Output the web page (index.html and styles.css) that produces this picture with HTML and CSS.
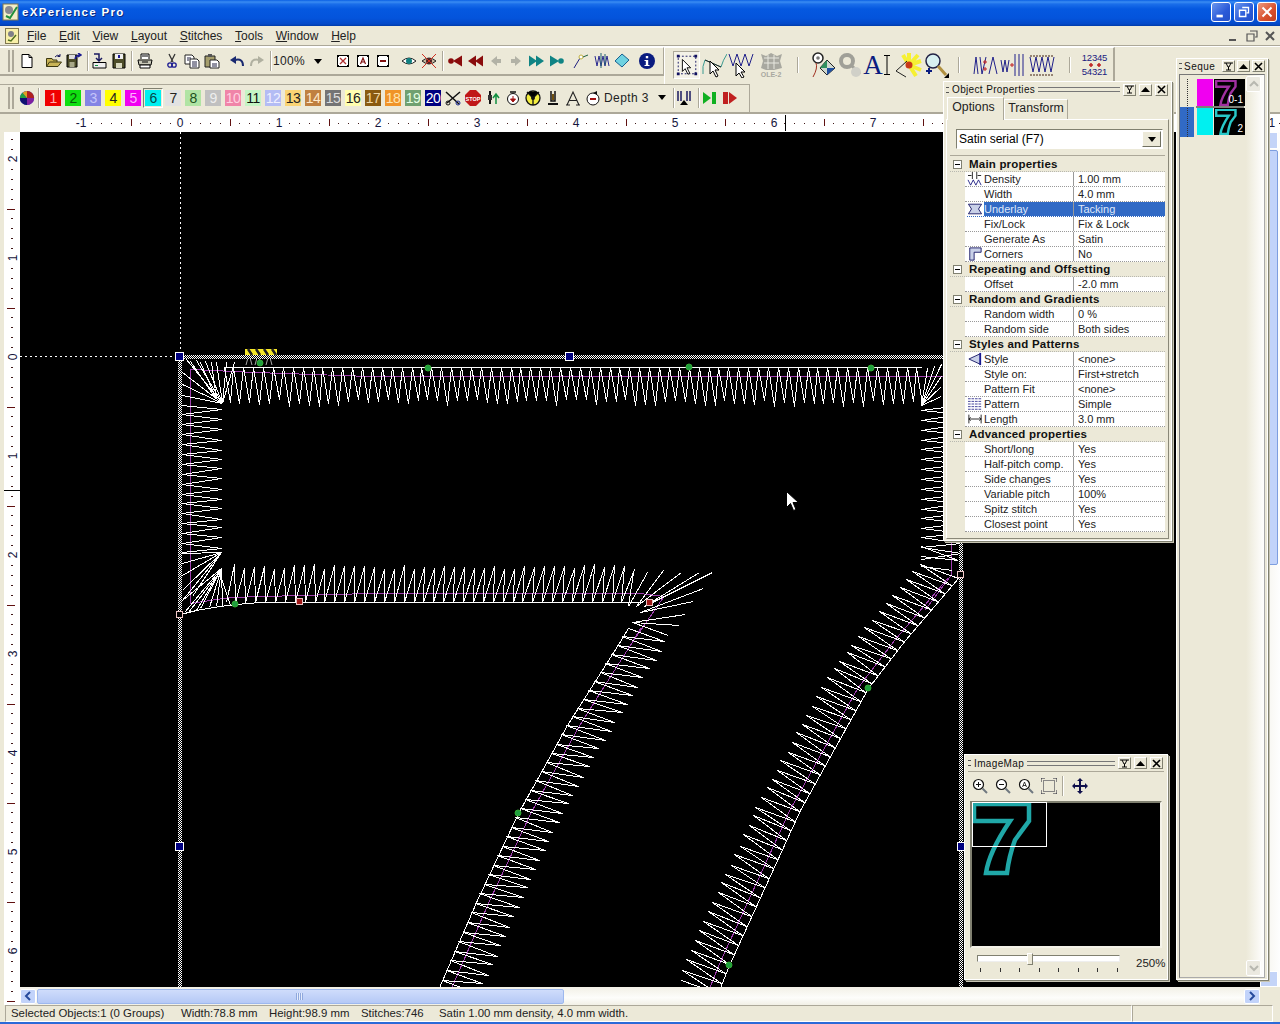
FILE: index.html
```html
<!DOCTYPE html>
<html lang="en">
<head>
<meta charset="utf-8">
<title>eXPerience Pro</title>
<link rel="stylesheet" href="styles.css">
</head>
<body>
<svg class="defs" width="0" height="0">
  <defs>
    <symbol id="seven" viewBox="972 802 60 74"><path d="M974 804H1029V821L1015 840Q1009 856 1007 873H986Q989 852 1010 821H974Z" fill="none" stroke="currentColor"/></symbol>
    <symbol id="pin" viewBox="0 0 9 9"><path d="M0 1H9M2 1L4 5H5L7 1M4.500 5V8M2 8H7" fill="none" stroke="#000"/></symbol>
    <symbol id="up" viewBox="0 0 9 9"><path d="M4.500 2L9 7H0Z" fill="#000"/></symbol>
    <symbol id="cross" viewBox="0 0 9 9"><path d="M1 1L8 8M8 1L1 8" stroke="#000" stroke-width="1.600"/></symbol>
    <pattern id="dither" width="2" height="2" patternUnits="userSpaceOnUse"><rect width="2" height="2" fill="#000"/><rect width="1" height="1" fill="#fff"/><rect x="1" y="1" width="1" height="1" fill="#fff"/></pattern>
  </defs>
</svg>
<div class="window">
  <header class="titlebar">
    <svg class="appicon" viewBox="0 0 18 18"><rect x="1" y="1" width="15" height="16" fill="#f2eec8" stroke="#807850"/><circle cx="7" cy="7" r="4" fill="#8a8a90"/><path d="M4 13L8 15L15 4" fill="none" stroke="#20903c" stroke-width="2"/></svg>
    <span class="apptitle">eXPerience Pro</span>
    <span class="winbtns">
      <span class="wb"><svg viewBox="0 0 20 20"><rect x="5" y="13" width="7" height="3" fill="#fff"/></svg></span>
      <span class="wb"><svg viewBox="0 0 20 20"><path d="M8 5H15V11H13M5 8H12V15H5Z" fill="none" stroke="#fff" stroke-width="1.500"/></svg></span>
      <span class="wb wb-close"><svg viewBox="0 0 20 20"><path d="M5 5L15 15M15 5L5 15" stroke="#fff" stroke-width="2.200"/></svg></span>
    </span>
  </header>
  <nav class="menubar">
    <svg class="docicon" viewBox="0 0 14 16"><rect x="0.500" y="0.500" width="13" height="15" fill="#f8f0a8" stroke="#807850"/><circle cx="6" cy="6" r="3" fill="#808088"/><path d="M3 12L6 13L11 7" fill="none" stroke="#507020" stroke-width="1.500"/></svg>
    <span class="mi"><u>F</u>ile</span><span class="mi"><u>E</u>dit</span><span class="mi"><u>V</u>iew</span><span class="mi"><u>L</u>ayout</span><span class="mi"><u>S</u>titches</span><span class="mi"><u>T</u>ools</span><span class="mi"><u>W</u>indow</span><span class="mi"><u>H</u>elp</span>
    <span class="mdibtns">
      <svg viewBox="0 0 16 16"><rect x="3" y="11" width="7" height="2" fill="#555"/></svg>
      <svg viewBox="0 0 16 16"><path d="M6 3H13V9H11M3 6H10V13H3Z" fill="none" stroke="#555" stroke-width="1.200"/></svg>
      <svg viewBox="0 0 16 16"><path d="M4 4L12 12M12 4L4 12" stroke="#555" stroke-width="2"/></svg>
    </span>
  </nav>
  <div class="band band-1">
    <div class="tb tb-main">
      <span class="grip"></span>
      <span class="b g3"><svg viewBox="0 0 16 16"><path d="M3 1.500H10L13 4.500V14.500H3Z" fill="#fff" stroke="#000"/><path d="M10 1.500V4.500H13" fill="none" stroke="#000"/></svg></span>
      <span class="b g7"><svg viewBox="0 0 16 16"><path d="M0.500 13.500V5.500H6L7 7H11V9M0.500 13.500L3.500 9H15.500L12 13.500Z" fill="#c9b456" stroke="#3c3810"/><path d="M9 4Q11 1 14 3M14 1V3.500H11.500" fill="none" stroke="#1a1a60"/></svg></span>
      <span class="b"><svg viewBox="0 0 16 16"><path d="M1 2H11V14H1Z" fill="#4c4c28" stroke="#000"/><rect x="3" y="2" width="6" height="4" fill="#ddd"/><rect x="3.500" y="9" width="5" height="5" fill="#a8a888"/><path d="M9 6Q10 2 14 2M12 0L15 2L12 4" fill="none" stroke="#1a1a90" stroke-width="1.500"/></svg></span>
      <span class="sep g3"></span>
      <span class="b g1"><svg viewBox="0 0 16 16"><path d="M2 9.500H15V15H2Z" fill="#eee" stroke="#000"/><rect x="4" y="12" width="3" height="1" fill="#109040"/><path d="M3 1H8V7M5 5L8 8L11 5" fill="none" stroke="#1a1a60" stroke-width="1.500"/></svg></span>
      <span class="b"><svg viewBox="0 0 16 16"><path d="M2 1H14V15H2Z" fill="#4c4c28" stroke="#000"/><rect x="4" y="1" width="8" height="5" fill="#eee"/><rect x="5" y="10" width="6" height="5" fill="#d8d8c0"/><path d="M8 2V5" stroke="#1a1a90" stroke-width="2"/></svg></span>
      <span class="sep g2"></span>
      <span class="b g3"><svg viewBox="0 0 16 16"><path d="M4 6V1H12V6" fill="#fff" stroke="#000"/><path d="M1 7H15L14 12H2Z" fill="#c8c8b8" stroke="#000"/><path d="M3 12H13V15H3Z" fill="#fff" stroke="#000"/><path d="M5 3H11M5 9H11" stroke="#000"/></svg></span>
      <span class="b g7"><svg viewBox="0 0 16 16"><path d="M5 1L9 9M11 1L7 9" stroke="#333" stroke-width="1.300"/><circle cx="6" cy="12" r="2.200" fill="none" stroke="#1a1a90" stroke-width="1.300"/><circle cx="10" cy="12" r="2.200" fill="none" stroke="#1a1a90" stroke-width="1.300"/></svg></span>
      <span class="b"><svg viewBox="0 0 16 16"><path d="M1 2H8L10 4V11H1Z" fill="#fff" stroke="#222"/><path d="M6 6H13L15 8V15H6Z" fill="#fff" stroke="#222"/><path d="M3 5H7M3 7H5M8 9H13M8 11H13M8 13H13" stroke="#224"/></svg></span>
      <span class="b"><svg viewBox="0 0 16 16"><path d="M1 3H11V14H1Z" fill="#a59e6c" stroke="#222"/><rect x="4" y="1" width="4" height="3" fill="#555"/><path d="M6 7H13L15 9V15H6Z" fill="#fff" stroke="#222"/><path d="M8 11H13M8 13H13" stroke="#224"/></svg></span>
      <span class="b g5"><svg viewBox="0 0 16 16"><path d="M14 13Q14 5 6 7" fill="none" stroke="#1a2a70" stroke-width="2"/><path d="M7 3V11L1 7Z" fill="#1a2a70"/></svg></span>
      <span class="b"><svg viewBox="0 0 16 16"><path d="M2 13Q2 5 10 7" fill="none" stroke="#b0b0a0" stroke-width="2"/><path d="M9 3V11L15 7Z" fill="#b0b0a0"/></svg></span>
      <span class="sep g3"></span>
      <span class="zoomval">100%</span>
      <span class="caret"></span>
      <span class="b g4"><svg viewBox="0 0 16 16"><rect x="2.500" y="2.500" width="11" height="11" fill="#fff" stroke="#000"/><path d="M2 2H4V4H2ZM12 2H14V4H12ZM2 12H4V14H2ZM12 12H14V14H12Z"/><path d="M5 5L11 11M11 5L5 11" stroke="#b03030" stroke-width="1.300"/></svg></span>
      <span class="b"><svg viewBox="0 0 16 16"><rect x="2.500" y="2.500" width="11" height="11" fill="#fff" stroke="#000"/><path d="M2 2H4V4H2ZM12 2H14V4H12ZM2 12H4V14H2ZM12 12H14V14H12Z"/><path d="M5.500 11L8 5L10.500 11M6.500 9H9.500" fill="none" stroke="#801010" stroke-width="1.200"/></svg></span>
      <span class="b"><svg viewBox="0 0 16 16"><rect x="2.500" y="2.500" width="11" height="11" fill="#fff" stroke="#000"/><path d="M2 2H4V4H2ZM12 2H14V4H12ZM2 12H4V14H2ZM12 12H14V14H12Z"/><rect x="5" y="7" width="6" height="2" fill="#801010"/></svg></span>
      <span class="b g6"><svg viewBox="0 0 16 16"><path d="M1 8Q8 2 15 8Q8 14 1 8Z" fill="#fff" stroke="#222"/><circle cx="8" cy="8" r="3" fill="#108080"/></svg></span>
      <span class="b"><svg viewBox="0 0 16 16"><path d="M1 8Q8 2 15 8Q8 14 1 8Z" fill="#c8b8a0" stroke="#222"/><circle cx="8" cy="8" r="3" fill="#502020"/><path d="M1 1L15 15M15 1L1 15" stroke="#d03020"/></svg></span>
      <span class="sep g3"></span>
      <span class="b g3 c-red"><svg viewBox="0 0 16 16"><circle cx="3" cy="8" r="2.800"/><path d="M5 8L14 2.500V13.500Z"/></svg></span>
      <span class="b c-red"><svg viewBox="0 0 16 16"><path d="M0 8L8 2.500V13.500ZM7 8L15 2.500V13.500Z"/></svg></span>
      <span class="b c-grey"><svg viewBox="0 0 16 16"><path d="M3 8L9 3V6H13V10H9V13Z"/></svg></span>
      <span class="b c-grey"><svg viewBox="0 0 16 16"><path d="M13 8L7 3V6H3V10H7V13Z"/></svg></span>
      <span class="b c-teal"><svg viewBox="0 0 16 16"><path d="M16 8L8 2.500V13.500ZM9 8L1 2.500V13.500Z"/></svg></span>
      <span class="b c-teal"><svg viewBox="0 0 16 16"><path d="M11 8L2 2.500V13.500Z"/><circle cx="13" cy="8" r="2.800"/></svg></span>
      <span class="b g5"><svg viewBox="0 0 16 16"><path d="M1 15L7 5" stroke="#202080"/><circle cx="8" cy="4" r="2" fill="#fff" stroke="#c0b040"/><path d="M10 4L15 2" stroke="#206040"/></svg></span>
      <span class="b g1"><svg viewBox="0 0 16 16"><path d="M1 3L3 13L5 3L7 13L9 3L11 13L13 3L15 13" fill="none" stroke="#2a2a90"/><path d="M7 0V15M11 1V12" stroke="#206070"/></svg></span>
      <span class="b"><svg viewBox="0 0 16 16"><path d="M8 1L15 7L8 14L1 8Z" fill="#6fd2e0" stroke="#186090"/></svg></span>
      <span class="b g5"><svg viewBox="0 0 16 16"><circle cx="8" cy="8" r="8" fill="#0a1c80"/><rect x="6.800" y="3" width="2.400" height="2.300" fill="#fff"/><path d="M5.500 7H9.200V12H10.500V13H5.500V12H6.800V8H5.500Z" fill="#fff"/></svg></span>
    </div>
    <div class="tb tb-tools">
      <span class="bl is-on"><svg viewBox="0 0 26 26"><rect x="3.500" y="3.500" width="19" height="19" fill="none" stroke="#101060" stroke-dasharray="2 2"/><path d="M2 2H5V5H2ZM21 2H24V5H21ZM2 21H5V24H2ZM21 21H24V24H21Z" fill="#101060"/><path d="M8 7V20L11 17L14 23L16 22L13 16H17Z" fill="#fff" stroke="#000"/></svg></span>
      <span class="bl"><svg viewBox="0 0 26 26"><path d="M2 22Q1 14 4 8L20 15Q22 8 26 2" fill="none" stroke="#3a9a90"/><path d="M4 8L20 15" stroke="#222"/><path d="M9 9V22L12 19L15 25L17 24L14 18H18Z" fill="#fff" stroke="#000"/></svg></span>
      <span class="bl"><svg viewBox="0 0 26 26"><path d="M1 2L5 14L9 2L13 14L17 2L21 14L25 2" fill="none" stroke="#20208a"/><path d="M8 11V24L11 21L14 26L16 25L13 20H17Z" fill="#fff" stroke="#000"/></svg></span>
      <span class="bl g3"><svg viewBox="0 0 26 26"><path d="M3 2L8 4L13 1L19 4L24 2L22 9L24 16L16 18H8L3 16L5 9Z" fill="#a8a8a0"/><path d="M6 6H21M6 11H21M10 3V17M16 3V17" stroke="#e8e8e0"/><text x="13" y="25" class="ole">OLE-2</text></svg></span>
      <span class="sep sep-l g13"></span>
      <span class="bl g11"><svg viewBox="0 0 26 26"><circle cx="8" cy="6" r="5" fill="#fff" stroke="#222" stroke-width="1.500"/><circle cx="8" cy="6" r="1.800" fill="#777"/><path d="M3 25Q8 16 6 11" fill="none" stroke="#a03020"/><path d="M17 8L25 16L17 23L10 16Z" fill="#d0d8d0" stroke="#222"/><path d="M17 8L17 16L10 16Z" fill="#309060"/><path d="M17 16L25 16L17 23Z" fill="#2050a0"/></svg></span>
      <span class="bl"><svg viewBox="0 0 26 26"><circle cx="10" cy="9" r="6" fill="none" stroke="#a0a098" stroke-width="4"/><path d="M10 2L12 4M3 9H5M15 14L23 22" stroke="#a0a098" stroke-width="3"/><circle cx="19" cy="20" r="5" fill="#d0d0c8"/></svg></span>
      <span class="bl bl-a"><span class="bigA">A</span><svg class="ibar" viewBox="0 0 6 20"><path d="M0 0.500H6M3 0.500V19.500M0 19.500H6" fill="none" stroke="#000"/></svg></span>
      <span class="bl g5"><svg viewBox="0 0 26 26"><path d="M13 13L13 1M13 13L22 3M13 13L25 9M13 13L25 18M13 13L20 24M13 13L7 3" stroke="#f6f032" stroke-width="4"/><circle cx="13" cy="13" r="3.500" fill="#c83818"/><path d="M0 19L11 9M0 19L10 25" stroke="#222" fill="none"/></svg></span>
      <span class="bl"><svg viewBox="0 0 26 26"><circle cx="10" cy="9" r="7" fill="#d8f0f0" stroke="#224" stroke-width="1.500"/><path d="M15 14L23 23" stroke="#b09040" stroke-width="3"/><path d="M3 19H9M6 16V22" stroke="#0a1c80" stroke-width="2"/><path d="M26 21V26H21Z"/></svg></span>
      <span class="sep sep-l g9"></span>
      <span class="bl g13"><svg viewBox="0 0 26 26"><path d="M1 22L3 5L5 22M7 5L9 22L13 5M16 22L20 5L24 22" fill="none" stroke="#20208a"/><path d="M10 10H14M12 8V12M10 17H14M12 15V19" stroke="#c02020"/></svg></span>
      <span class="bl"><svg viewBox="0 0 26 26"><path d="M1 8L3 20L5 8L7 20L9 8M15 2V24M19 2V24M23 2V24" fill="none" stroke="#20208a"/><path d="M10 13H14M12 11V15" stroke="#c02020"/></svg></span>
      <span class="bl g2"><svg viewBox="0 0 26 26"><path d="M1 4H25M1 23H25" stroke="#402010" stroke-dasharray="2 1"/><path d="M1 5L4 20L7 5L10 20L13 5L16 20L19 5L22 20L25 5" fill="none" stroke="#20208a"/></svg></span>
      <span class="sep sep-l g14"></span>
      <span class="bl bl-num g11"><span>12345</span><svg viewBox="0 0 22 6"><path d="M5 3H9M7 1V5M13 3H17M15 1V5" stroke="#c02020" stroke-width="1.500"/></svg><span>54321</span></span>
    </div>
  </div>
  <div class="band band-2">
    <div class="tb tb-colors">
      <span class="grip"></span>
      <span class="b g3"><svg viewBox="0 0 18 18"><circle cx="9" cy="9" r="8" fill="#2040c0"/><path d="M9 9V1A8 8 0 0 1 17 9Z" fill="#b02020"/><path d="M9 9H17A8 8 0 0 1 9 17Z" fill="#8020a0"/><path d="M9 9V17A8 8 0 0 1 1 9Z" fill="#101070"/><path d="M9 9H1A8 8 0 0 1 4 3Z" fill="#20a040"/><path d="M9 9L4 3A8 8 0 0 1 9 1Z" fill="#e0a020"/></svg></span>
      <span class="sep g1"></span>
      <span class="swatches">
        <span class="sw s1">1</span><span class="sw s2">2</span><span class="sw s3">3</span><span class="sw s4">4</span><span class="sw s5">5</span><span class="sw s6">6</span><span class="sw s7">7</span><span class="sw s8">8</span><span class="sw s9">9</span><span class="sw s10">10</span><span class="sw s11">11</span><span class="sw s12">12</span><span class="sw s13">13</span><span class="sw s14">14</span><span class="sw s15">15</span><span class="sw s16">16</span><span class="sw s17">17</span><span class="sw s18">18</span><span class="sw s19">19</span><span class="sw s20">20</span>
      </span>
      <span class="b"><svg viewBox="0 0 16 16"><path d="M1 2L14 14M15 2L2 13" stroke="#111" stroke-width="1.500"/><circle cx="3" cy="13" r="2" fill="none" stroke="#111"/><circle cx="13" cy="13" r="2" fill="none" stroke="#1a2a90"/></svg></span>
      <span class="b"><svg viewBox="0 0 16 16"><path d="M5 0H11L16 5V11L11 16H5L0 11V5Z" fill="#c01818"/><text x="8" y="10.500" class="stop">STOP</text></svg></span>
      <span class="b"><svg viewBox="0 0 16 16"><path d="M5 1V14" stroke="#111" stroke-width="2"/><rect x="3" y="5" width="4" height="5" fill="#333"/><path d="M11 14V5M8 8L11 4L14 8" fill="none" stroke="#109040" stroke-width="1.500"/></svg></span>
      <span class="b"><svg viewBox="0 0 16 16"><circle cx="8" cy="9" r="5.500" fill="#fff" stroke="#111"/><path d="M5 2H11" stroke="#111" stroke-width="1.500"/><path d="M8 6V10M5.500 9L8 12L10.500 9Z" fill="#a01010" stroke="#a01010"/></svg></span>
      <span class="b"><svg viewBox="0 0 16 16"><circle cx="8" cy="8" r="7" fill="#f4ee40" stroke="#111" stroke-width="1.300"/><path d="M2 2L8 8L14 2M8 8V15" stroke="#111" stroke-width="1.300"/><circle cx="8" cy="8" r="2" fill="#111"/></svg></span>
      <span class="b"><svg viewBox="0 0 16 16"><path d="M6 1V11H10V1" fill="none" stroke="#111" stroke-width="1.500"/><path d="M3 14H13" stroke="#111" stroke-width="2"/><path d="M8 4V10" stroke="#705010" stroke-width="2"/></svg></span>
      <span class="b"><svg viewBox="0 0 16 16"><path d="M2 15L8 2L14 15M4.500 10.500H11.500M1 15H5M11 15H15" fill="none" stroke="#222" stroke-width="1.100"/></svg></span>
      <span class="b"><svg viewBox="0 0 16 16"><circle cx="8" cy="9" r="6" fill="#fff" stroke="#111"/><path d="M5 9H11" stroke="#a01010" stroke-width="2"/><path d="M8 3L12 1V5" fill="#111"/></svg></span>
      <span class="depth">Depth 3</span>
      <span class="caret"></span>
      <span class="sep"></span>
      <span class="b"><svg viewBox="0 0 16 16"><path d="M2 1V11M5 1V11M11 1V11M14 1V11" stroke="#1a1a60" stroke-width="1.500"/><path d="M4 15L8 10L12 15Z"/></svg></span>
      <span class="sep g4"></span>
      <span class="b g1"><svg viewBox="0 0 16 16"><path d="M1 2L9 8L1 14Z" fill="#10b020"/><rect x="10" y="2" width="4" height="12" fill="#10b020"/></svg></span>
      <span class="b"><svg viewBox="0 0 16 16"><rect x="1" y="2" width="5" height="12" fill="#c02020"/><path d="M7 2L15 8L7 14Z" fill="#c02020"/></svg></span>
    </div>
  </div>
  <main class="work">
    <div class="corner"></div>
    <svg class="ruler-h" id="rulerH" width="1260" height="18" viewBox="20 114 1260 18"></svg>
    <svg class="ruler-v" id="rulerV" width="20" height="873" viewBox="0 132 20 873"></svg>
    <div class="canvas">
      <svg class="art" width="1240" height="855" viewBox="20 132 1240 855">
        <path d="M180.500 132V356M20 356.500H180" stroke="#fff" stroke-dasharray="2 3" fill="none"/>
        <path id="pink" class="pink" d=""/>
        <path id="stitches" class="stitch" d=""/>
        <path d="M246 365L249 354L252 365M255 365L258 354L261 365M266 365L269 354L272 365" stroke="#aaa" fill="none"/>
        <rect x="178" y="355" width="4" height="632" fill="url(#dither)"/>
        <rect x="178" y="355" width="790" height="4" fill="url(#dither)"/>
        <rect x="959" y="355" width="4" height="632" fill="url(#dither)"/>
        <rect x="245" y="349" width="32" height="6" fill="#f4e628"/>
        <path d="M248 349L252 355M256 349L260 355M264 349L268 355M272 349L276 355" stroke="#222" stroke-width="2.500"/>
        <g id="nodes"></g>
        <g class="handle"><rect x="175.500" y="352.500" width="8" height="8"/><rect x="565.500" y="352.500" width="8" height="8"/><rect x="175.500" y="842.500" width="8" height="8"/><rect x="957.500" y="842.500" width="8" height="8"/></g>
        <path d="M786.500 491.500V507.500L790.500 503.500L793.500 510.500L796 509.500L793 502.500H798.500Z" fill="#fff" stroke="#000"/>
      </svg>
    </div>
    <div class="vscroll">
      <span class="varrow"></span>
      <span class="vthumb"></span>
      <span class="varrow varrow-d"></span>
    </div>
    <div class="hscroll">
      <span class="harrow"><svg viewBox="0 0 12 12"><path d="M8 2L4 6L8 10" fill="none" stroke="#264a9c" stroke-width="2"/></svg></span>
      <span class="hthumb"><i></i></span>
      <span class="harrow harrow-r"><svg viewBox="0 0 12 12"><path d="M4 2L8 6L4 10" fill="none" stroke="#264a9c" stroke-width="2"/></svg></span>
    </div>
    <span class="hcorner"></span>

    <section class="panel props">
      <div class="ptitle"><span class="pgrip"></span><span class="pname">Object Properties</span><span class="plines"></span><span class="mb"><svg><use href="#pin"/></svg></span><span class="mb"><svg><use href="#up"/></svg></span><span class="mb"><svg><use href="#cross"/></svg></span></div>
      <div class="tabs"><span class="tab tab-on">Options</span><span class="tab">Transform</span></div>
      <div class="tabbody">
        <div class="combo"><span>Satin serial (F7)</span><span class="combo-btn"><i class="caret"></i></span></div>
        <div class="pgrid">
          <div class="gh"><i class="box"></i>Main properties</div>
          <div class="gr"><span class="gl"><span class="gi"><svg viewBox="0 0 16 16"><path d="M0 9L3 15L6 9L9 15L12 9L15 15" fill="none" stroke="#1a1a80"/><path d="M5 0V8M10 0V8M0 4H4M15 4H11" stroke="#111"/></svg></span>Density</span><span class="gv">1.00 mm</span></div>
          <div class="gr"><span class="gl"><span class="gi"></span>Width</span><span class="gv">4.0 mm</span></div>
          <div class="gr gr-sel"><span class="gl"><span class="gi"><svg viewBox="0 0 16 16"><path d="M0.500 2.500H15.500L12 8L15.500 13.500H0.500L4 8Z" fill="#c8d0e8" stroke="#101060"/></svg></span>Underlay</span><span class="gv">Tacking</span></div>
          <div class="gr"><span class="gl"><span class="gi"></span>Fix/Lock</span><span class="gv">Fix &amp; Lock</span></div>
          <div class="gr"><span class="gl"><span class="gi"></span>Generate As</span><span class="gv">Satin</span></div>
          <div class="gr"><span class="gl"><span class="gi"><svg viewBox="0 0 16 16"><path d="M2 15V1H15V6H7V15Z" fill="#c8d0e8" stroke="#101060"/></svg></span>Corners</span><span class="gv">No</span></div>
          <div class="gh"><i class="box"></i>Repeating and Offsetting</div>
          <div class="gr"><span class="gl"><span class="gi"></span>Offset</span><span class="gv">-2.0 mm</span></div>
          <div class="gh"><i class="box"></i>Random and Gradients</div>
          <div class="gr"><span class="gl"><span class="gi"></span>Random width</span><span class="gv">0 %</span></div>
          <div class="gr"><span class="gl"><span class="gi"></span>Random side</span><span class="gv">Both sides</span></div>
          <div class="gh"><i class="box"></i>Styles and Patterns</div>
          <div class="gr"><span class="gl"><span class="gi"><svg viewBox="0 0 16 16"><path d="M1 8L14 2V14Z" fill="#c8d0e8" stroke="#101060"/><path d="M14 1V15" stroke="#1a1a90" stroke-width="2"/></svg></span>Style</span><span class="gv">&lt;none&gt;</span></div>
          <div class="gr"><span class="gl"><span class="gi"></span>Style on:</span><span class="gv">First+stretch</span></div>
          <div class="gr"><span class="gl"><span class="gi"></span>Pattern Fit</span><span class="gv">&lt;none&gt;</span></div>
          <div class="gr"><span class="gl"><span class="gi"><svg viewBox="0 0 16 16"><path d="M0 2H16M0 5H16M0 8H16M0 11H16M0 14H16" stroke="#303090" stroke-dasharray="3 1"/></svg></span>Pattern</span><span class="gv">Simple</span></div>
          <div class="gr"><span class="gl"><span class="gi"><svg viewBox="0 0 16 16"><path d="M1 3V13M15 3V13M1 8H15M3 6L1 8L3 10M13 6L15 8L13 10" fill="none" stroke="#111"/></svg></span>Length</span><span class="gv">3.0 mm</span></div>
          <div class="gh"><i class="box"></i>Advanced properties</div>
          <div class="gr"><span class="gl"><span class="gi"></span>Short/long</span><span class="gv">Yes</span></div>
          <div class="gr"><span class="gl"><span class="gi"></span>Half-pitch comp.</span><span class="gv">Yes</span></div>
          <div class="gr"><span class="gl"><span class="gi"></span>Side changes</span><span class="gv">Yes</span></div>
          <div class="gr"><span class="gl"><span class="gi"></span>Variable pitch</span><span class="gv">100%</span></div>
          <div class="gr"><span class="gl"><span class="gi"></span>Spitz stitch</span><span class="gv">Yes</span></div>
          <div class="gr"><span class="gl"><span class="gi"></span>Closest point</span><span class="gv">Yes</span></div>
        </div>
      </div>
    </section>

    <section class="panel seq">
      <div class="ptitle"><span class="pgrip"></span><span class="pname">Seque</span><span class="mb"><svg><use href="#pin"/></svg></span><span class="mb"><svg><use href="#up"/></svg></span><span class="mb"><svg><use href="#cross"/></svg></span></div>
      <div class="seqbody">
        <div class="seqlist">
          <div class="seqrow"><span class="tree"></span><span class="chip chip-m"></span><span class="thumb th-m"><svg><use href="#seven"/></svg><b>0-1</b></span></div>
          <div class="seqrow seqrow-sel"><span class="tree tree-sel"></span><span class="chip chip-c"></span><span class="thumb th-c"><svg><use href="#seven"/></svg><b>2</b></span></div>
        </div>
        <div class="seqscroll"><span class="sarrow"><svg viewBox="0 0 10 10"><path d="M1 7L5 3L9 7" fill="none" stroke="#b8b8b0" stroke-width="2"/></svg></span><span class="sarrow"><svg viewBox="0 0 10 10"><path d="M1 3L5 7L9 3" fill="none" stroke="#b8b8b0" stroke-width="2"/></svg></span></div>
      </div>
    </section>

    <section class="panel imap">
      <div class="ptitle"><span class="pgrip"></span><span class="pname">ImageMap</span><span class="plines"></span><span class="mb"><svg><use href="#pin"/></svg></span><span class="mb"><svg><use href="#up"/></svg></span><span class="mb"><svg><use href="#cross"/></svg></span></div>
      <div class="imtools">
        <span class="b"><svg viewBox="0 0 16 16"><circle cx="6.500" cy="6.500" r="5" fill="#fff" stroke="#111" stroke-width="1.200"/><path d="M4 6.500H9M6.500 4V9" stroke="#111"/><path d="M10.500 10.500L15 15" stroke="#707880" stroke-width="2"/></svg></span>
        <span class="b g3"><svg viewBox="0 0 16 16"><circle cx="6.500" cy="6.500" r="5" fill="#fff" stroke="#111" stroke-width="1.200"/><path d="M4 6.500H9" stroke="#111"/><path d="M10.500 10.500L15 15" stroke="#707880" stroke-width="2"/></svg></span>
        <span class="b g3"><svg viewBox="0 0 16 16"><circle cx="6.500" cy="6.500" r="5" fill="#fff" stroke="#111" stroke-width="1.200"/><path d="M4.500 9L6.500 4L8.500 9M5 7.500H8" fill="none" stroke="#111" stroke-width=".8"/><path d="M10.500 10.500L15 15" stroke="#707880" stroke-width="2"/></svg></span>
        <span class="b g3"><svg viewBox="0 0 16 16"><rect x="2.500" y="2.500" width="11" height="11" fill="none" stroke="#223" stroke-dasharray="1 1"/><path d="M0 4V0H4M12 0H16V4M0 12V16H4M16 12V16H12" fill="none" stroke="#223"/></svg></span>
        <span class="sep g3"></span>
        <span class="b g7"><svg viewBox="0 0 16 16"><path d="M8 0L11 3H9V7H13V5L16 8L13 11V9H9V13H11L8 16L5 13H7V9H3V11L0 8L3 5V7H7V3H5Z" fill="#10104c"/></svg></span>
      </div>
      <div class="imview">
        <svg class="imseven"><use href="#seven"/></svg>
        <span class="imbox"></span>
      </div>
      <div class="imzoom">
        <div class="slider"><span class="strack"></span><span class="sknob"></span><span class="sticks"><i></i><i></i><i></i><i></i><i></i><i></i><i></i><i></i></span></div>
        <span class="pct">250%</span>
      </div>
    </section>
  </main>
  <footer class="statusbar">
    <div class="st st-a">
      <span class="f1">Selected Objects:1 (0 Groups)</span><span class="f2">Width:78.8 mm</span><span class="f3">Height:98.9 mm</span><span class="f4">Stitches:746</span><span>Satin 1.00 mm density, 4.0 mm width.</span>
    </div>
    <div class="st st-b"></div>
  </footer>
  <div class="taskline"></div>
</div>
<script src="script.js"></script>
</body>
</html>
```

FILE: styles.css
```css
* { box-sizing: border-box; }
html, body { margin: 0; padding: 0; }
body { width: 1280px; height: 1024px; overflow: hidden; background: #ece9d8; font-family: "Liberation Sans", Arial, sans-serif; font-size: 12px; color: #000; }
.defs { position: absolute; }
.window { width: 1280px; height: 1024px; display: flex; flex-direction: column; }

.titlebar { height: 26px; flex: none; display: flex; align-items: center; padding: 0 3px 2px 2px; background: linear-gradient(#0a5fe4 0, #3a8cf2 2px, #1a6eea 4px, #0558e0 9px, #0454dc 18px, #0449c8 24px, #003aa8 26px); }
.appicon { width: 18px; height: 18px; flex: none; }
.apptitle { margin-left: 2px; color: #fff; font-weight: bold; font-size: 11.5px; letter-spacing: 1.300px; text-shadow: 1px 1px #0a2a80; }
.winbtns { margin-left: auto; display: flex; gap: 3px; }
.wb { width: 20px; height: 20px; border: 1px solid #fff; border-radius: 3px; background: linear-gradient(135deg, #6a96ee, #2a5ad8 60%, #2450c8); display: block; }
.wb svg { display: block; width: 18px; height: 18px; }
.wb-close { background: linear-gradient(135deg, #eb9a80, #d8502c 60%, #c04020); }

.menubar { height: 21px; flex: none; display: flex; align-items: center; padding-left: 5px; background: #ece9d8; border-bottom: 1px solid #fff; box-shadow: inset 0 -1px #aca899; }
.docicon { width: 14px; height: 16px; margin-right: 8px; flex: none; }
.mi { margin-right: 12.700px; font-size: 12px; color: #222; }
.mdibtns { margin-left: auto; display: flex; gap: 2px; margin-right: 2px; }
.mdibtns svg { width: 16px; height: 16px; display: block; }

.band { display: flex; align-items: flex-start; background: #ece9d8; flex: none; }
.band-1 { height: 37px; }
.band-2 { height: 30px; border-bottom: 2px solid #aca899; }
.tb { display: flex; align-items: center; }
.tb-main { width: 664px; height: 29px; padding-left: 8px; border-bottom: 2px solid #aca899; border-right: 1px solid #aca899; border-top: 1px solid #fff; }
.tb-tools { width: 451px; height: 37px; padding-left: 8px; border-left: 1px solid #fff; border-right: 2px solid #aca899; border-top: 1px solid #fff; align-items: center; padding-bottom: 3px; }
.tb-colors { width: 750px; height: 28px; padding: 0 0 2px 8px; border-top: 1px solid #aca899; border-right: 1px solid #aca899; }

.grip { width: 6px; height: 22px; flex: none; margin-right: 0; border-left: 2px solid #aca899; border-right: 2px solid #aca899; }
.b { width: 20px; height: 20px; flex: none; display: flex; align-items: center; justify-content: center; }
.b svg { width: 16px; height: 16px; display: block; }
.bl { width: 27px; height: 28px; flex: none; display: flex; align-items: center; justify-content: center; }
.bl svg { width: 26px; height: 26px; display: block; }
.bl svg.ibar { width: 6px; height: 20px; margin-top: 1px; }
.bl-a { gap: 1px; }
.bigA { font-family: "Liberation Serif", serif; font-size: 27px; line-height: 26px; color: #0a1c80; }
.is-on { background: #f4f2e8; border: 1px solid #aca899; border-right-color: #fff; border-bottom-color: #fff; }
.is-on svg { width: 24px; height: 24px; }
.bl-num { flex-direction: column; font-size: 9.500px; line-height: 8px; color: #1a1a80; letter-spacing: -.2px; }
.bl-num svg { width: 22px; height: 6px; }
.sep { width: 1px; height: 20px; flex: none; background: #aca899; box-shadow: 1px 0 #fff; }
.sep-l { height: 16px; }
.g1 { margin-left: 1px; } .g2 { margin-left: 2px; } .g3 { margin-left: 3px; } .g4 { margin-left: 4px; }
.g5 { margin-left: 5px; } .g6 { margin-left: 6px; } .g7 { margin-left: 7px; } .g9 { margin-left: 9px; } .g11 { margin-left: 11px; } .g13 { margin-left: 13px; } .g14 { margin-left: 14px; }
.zoomval { width: 36px; padding-left: 2px; font-size: 12px; letter-spacing: .3px; color: #222; flex: none; }
.caret { display: block; width: 0; height: 0; flex: none; border: 4px solid transparent; border-top: 5px solid #000; border-bottom: 0; margin-left: 7px; margin-right: 7px; }
.c-red { fill: #8a0c0c; } .c-grey { fill: #b2b2a6; } .c-teal { fill: #108484; }
.ole { font-size: 7px; font-weight: bold; text-anchor: middle; fill: #a8a8a0; }
.stop { font-size: 5.500px; font-weight: bold; text-anchor: middle; fill: #fff; }

.swatches { display: flex; flex: none; margin-left: 4px; }
.sw { width: 20px; height: 20px; flex: none; display: flex; align-items: center; justify-content: center; font-size: 14px; letter-spacing: -.6px; border: 2px solid #ece9d8; line-height: 16px; }
.s1 { background: #f00000; color: #ffb0b0; } .s2 { background: #10e010; color: #065a06; } .s3 { background: #8484e4; color: #c4c4fa; } .s4 { background: #ffff00; color: #222; } .s5 { background: #f000f0; color: #ffb0ff; }
.s6 { background: #00f0f0; color: #064848; border: 1px solid; border-color: #808070 #fff #fff #808070; padding: 1px; background-clip: content-box; }
.s7 { background: #e2e2e2; color: #222; } .s8 { background: #b0e4a4; color: #205020; } .s9 { background: #c0c0c0; color: #eee; } .s10 { background: #f084a8; color: #ffd0e0; }
.s11 { background: #c4f4c4; color: #111; } .s12 { background: #b4bcf4; color: #f0f0ff; } .s13 { background: #fad474; color: #222; } .s14 { background: #c08040; color: #ffe8c8; } .s15 { background: #747474; color: #ddd; }
.s16 { background: #ffffb0; color: #222; } .s17 { background: #8a5a10; color: #f0d8a8; } .s18 { background: #f09428; color: #ffe4b0; } .s19 { background: #70a070; color: #e4ffe4; } .s20 { background: #000080; color: #fff; }
.depth { margin-left: 1px; width: 45px; flex: none; font-size: 12px; letter-spacing: .4px; color: #222; white-space: nowrap; }
.tb-colors .caret { margin-left: 9px; }

.work { position: relative; height: 891px; flex: none; display: grid; grid-template-columns: 20px 1240px 20px; grid-template-rows: 18px 855px 18px; }
.corner { background: #ece9d8; }
.ruler-h { grid-column: 2 / 4; display: block; background: #fff; }
.ruler-v { grid-row: 2 / 4; grid-column: 1; display: block; }
.canvas { background: #000; overflow: hidden; }
.art { display: block; }
.stitch { fill: none; stroke: #fff; stroke-width: 1; shape-rendering: crispEdges; }
.pink { fill: none; stroke: #a040b0; stroke-width: 1; shape-rendering: crispEdges; }
.handle rect { fill: #000080; stroke: #fff; }
.rnum { font-size: 12px; fill: #14143c; text-anchor: middle; }

.vscroll { display: flex; flex-direction: column; align-items: stretch; background: linear-gradient(90deg, #f4f2ea, #fefefe); padding-right: 2px; }
.varrow { height: 17px; flex: none; background: #c4d4f8; border: 1px solid #fff; }
.vthumb { height: 415px; flex: none; margin-top: 1px; background: #c2d3fa; border: 1px solid #7e9ee0; border-radius: 2px; }
.varrow-d { margin-top: auto; height: 16px; }

.hscroll { grid-column: 2; display: flex; align-items: center; background: linear-gradient(#f2f0e6, #fdfdfb 60%, #f2f0e6); padding: 1px 0 1px 0; }
.harrow { width: 16px; height: 15px; flex: none; background: #c2d3fa; border: 1px solid #fff; border-radius: 2px; display: flex; align-items: center; justify-content: center; }
.harrow svg { width: 12px; height: 12px; display: block; }
.hthumb { width: 527px; height: 15px; flex: none; margin-left: 1px; background: linear-gradient(#cfdcfb, #b5c9f6); border: 1px solid #9db8ee; border-radius: 2px; display: flex; align-items: center; justify-content: center; }
.hthumb i { display: block; width: 7px; height: 7px; margin-left: -2px; background: repeating-linear-gradient(90deg, #8fa8dc 0 1px, #e4ecfd 1px 2px); }
.harrow-r { margin-left: auto; }
.hcorner { background: #ece9d8; }

.panel { position: absolute; background: #ece9d8; border: 1px solid #fff; box-shadow: 1px 1px 0 #808070, 2px 2px 0 #c8c5b4; display: flex; flex-direction: column; }
.ptitle { height: 14px; flex: none; display: flex; align-items: center; padding: 0 1px 0 0; font-size: 10px; gap: 3px; color: #111; }
.pgrip { width: 3px; height: 6px; flex: none; border-top: 1px solid #555; border-bottom: 1px solid #555; }
.pname { letter-spacing: .35px; white-space: nowrap; flex: none; }
.plines { flex: 1; height: 5px; border-top: 1px solid #777; border-bottom: 1px solid #777; }
.mb { width: 13px; height: 12px; flex: none; background: #ece9d8; border: 1px solid; border-color: #fff #808070 #808070 #fff; display: flex; align-items: center; justify-content: center; }
.mb svg { width: 9px; height: 9px; display: block; }

.props { left: 943px; top: -33px; width: 229px; height: 460px; padding: 1px 2px; }
.props .ptitle { height: 13px; }
.tabs { display: flex; height: 23px; flex: none; padding-left: 1px; align-items: flex-end; }
.tab { height: 20px; padding: 1px 2px 0 2px; width: 64px; text-align: center; font-size: 12.300px; color: #222; border: 1px solid #aca899; border-bottom: 0; border-left-color: #fff; border-top-color: #fff; }
.tab-on { height: 23px; width: 57px; background: #ece9d8; position: relative; z-index: 1; padding: 2px 4px 0 0; margin-bottom: -1px; }
.tabbody { flex: 1; border: 1px solid; border-color: #fff #8a8878 #8a8878 #fff; padding: 9px 3px 0 3px; }
.combo { height: 20px; margin: 0 2px 0 6px; display: flex; align-items: center; justify-content: space-between; background: #fff; border: 1px solid; border-color: #808070 #fff #fff #808070; padding-left: 2px; font-size: 12px; }
.combo-btn { width: 19px; height: 16px; margin-right: 1px; background: #ece9d8; border: 1px solid; border-color: #fff #707060 #707060 #fff; display: flex; align-items: center; justify-content: center; }
.combo-btn .caret { margin: 0; }
.pgrid { margin-top: 6px; border-top: 1px solid #aca899; padding-top: 1px; }
.gh { height: 15px; display: flex; align-items: center; font-weight: bold; font-size: 11.500px; letter-spacing: .2px; color: #111; white-space: nowrap; border-bottom: 1px dotted #b8b8b0; }
.box { display: block; position: relative; width: 9px; height: 9px; margin: 0 7px 0 3px; flex: none; border: 1px solid #808070; background: #fff; }
.box::after { content: ""; position: absolute; left: 1px; top: 3px; width: 5px; height: 1px; background: #000; }
.gr { height: 15px; display: flex; margin-left: 15px; background: #fff; font-size: 11px; color: #222; border-bottom: 1px dotted #999; line-height: 14px; white-space: nowrap; }
.gl { width: 109px; flex: none; display: flex; border-right: 1px solid #999; }
.gi { width: 19px; flex: none; display: flex; align-items: center; justify-content: center; }
.gi svg { width: 16px; height: 14px; display: block; }
.gv { padding-left: 4px; flex: 1; }
.gr-sel { background: #316ac5; color: #dfe8fa; border-bottom-color: #fff; }
.gr-sel .gi { background: #fff; }

.seq { left: 1176px; top: -56px; width: 92px; height: 922px; padding: 0 2px 1px; }
.seq .ptitle { gap: 2px; padding-right: 0; }
.seq .pname { letter-spacing: .5px; margin-right: auto; }
.seqbody { flex: 1; display: flex; border: 1px solid; border-color: #777 #aaa #aaa #777; margin-top: 1px; }
.seqlist { width: 66px; flex: none; padding-top: 4px; }
.seqrow { height: 29px; display: flex; position: relative; }
.seqrow + .seqrow::after { content: ""; position: absolute; left: 16px; top: -2px; width: 48px; height: 2px; background: #808078; }
.tree { width: 15px; height: 29px; flex: none; border-left: 1px dotted #333; margin-left: 7px; margin-right: -6px; }
.tree-sel { position: relative; }
.seqrow-sel::before { content: ""; position: absolute; left: 0; top: -1px; width: 14px; height: 30px; background: #316ac5; }
.chip { width: 16px; height: 27px; flex: none; margin-left: 1px; position: relative; }
.chip-m { background: #f000f0; } .chip-c { background: #00f0f0; }
.thumb { width: 31px; height: 27px; flex: none; margin-left: 1px; background: #000; position: relative; display: block; overflow: hidden; }
.thumb svg { position: absolute; left: 1px; top: 1px; width: 22px; height: 26px; display: block; stroke-width: 7px; }
.thumb b { position: absolute; right: 2px; bottom: 1px; font-size: 10px; font-weight: normal; color: #fff; }
.th-m { color: #a030a0; } .th-c { color: #28c8c8; }
.seqscroll { flex: 1; background: linear-gradient(90deg, #ece9d8, #fff); display: flex; flex-direction: column; justify-content: space-between; padding: 1px 3px 1px 0; }
.sarrow { height: 16px; background: #ebe9e0; border: 1px solid #fff; border-radius: 2px; display: flex; align-items: center; justify-content: center; }
.sarrow svg { width: 10px; height: 10px; display: block; }

.imap { left: 964px; top: 640px; width: 204px; height: 226px; padding: 1px 3px; }
.imtools { height: 29px; flex: none; display: flex; align-items: center; padding-left: 2px; border-top: 1px solid #aca899; margin-top: 1px; }
.imview { position: relative; height: 147px; flex: none; margin: 1px 2px 0 2px; background: #000; border: 2px solid; border-color: #808070 #f4f2e8 #f4f2e8 #808070; }
.imseven { position: absolute; left: 0; top: -1px; width: 60px; height: 74px; color: #20a8a8; stroke-width: 4.500px; }
.imbox { position: absolute; left: 0; top: -1px; width: 75px; height: 45px; border: 1px solid #fff; }
.imzoom { flex: 1; display: flex; padding: 7px 5px 0 9px; }
.slider { position: relative; width: 143px; height: 24px; flex: none; }
.strack { position: absolute; left: 0; top: 0; width: 143px; height: 7px; background: #fff; border: 1px solid; border-color: #808070 #eee #eee #808070; }
.sknob { position: absolute; left: 50px; top: -2px; width: 6px; height: 12px; background: #ece9d8; border: 1px solid; border-color: #fff #808070 #808070 #fff; }
.sticks { position: absolute; left: 3px; top: 13px; width: 138px; display: flex; justify-content: space-between; }
.sticks i { width: 1px; height: 4px; background: #333; display: block; }
.pct { margin-left: 16px; margin-top: 2px; font-size: 11.500px; color: #222; }

.statusbar { height: 17px; flex: none; display: flex; font-size: 11.400px; background: #ece9d8; }
.st { border: 1px solid; border-color: #aca899 #fff #fff #aca899; height: 17px; line-height: 15px; white-space: nowrap; color: #222; }
.st-a { width: 1127px; margin-left: 5px; padding-left: 5px; display: flex; }
.st-b { width: 141px; }
.f1 { width: 170px; } .f2 { width: 88px; } .f3 { width: 92px; } .f4 { width: 78px; }
.taskline { height: 2px; flex: none; background: #2a6ad8; }
```

FILE: script.js
```js
(function () {
  var NS = "http://www.w3.org/2000/svg";
  var seed = 17;
  function rnd() { seed = (seed * 1103 + 12345) % 65536; return seed / 65536; }
  function jit(a) { return (rnd() - 0.5) * 2 * a; }
  function r(n) { return Math.floor(n) + 0.5; }
  var d = [];
  function line(pts) {
    d.push("M" + pts.map(function (p) { return r(p[0]) + " " + r(p[1]); }).join("L"));
  }
  function fan(apex, ends) {
    ends.forEach(function (e) { line([apex, e]); });
  }

  /* top bar */
  line([[224, 367], [921, 367]]);
  var top = [];
  for (var x = 224; x < 922; x += 9.9) {
    top.push([x, 367], [x + 6, 403 + jit(4)]);
  }
  line(top);

  /* left bar */
  var left = [];
  for (var y = 405; y < 552; y += 9.9) {
    left.push([182, y], [221, y + 5 + jit(1)]);
  }
  left.push([182, 552]);
  line(left);

  /* right bar */
  var rightBar = [];
  for (y = 405; y < 560; y += 9.9) {
    rightBar.push([961, y], [921, y + 5 + jit(1)]);
  }
  line(rightBar);

  /* corners */
  fan([222, 403], [[186, 359], [196, 360], [205, 361], [216, 362], [226, 362], [234, 362], [182, 372], [182, 384], [182, 395]]);
  fan([216, 399], [[190, 361], [200, 362], [211, 362]]);
  fan([221, 552], [[182, 553], [182, 563], [182, 575], [182, 590], [192, 596], [182, 600]]);
  fan([221, 568], [[182, 600], [184, 612], [196, 610], [209, 607], [216, 606], [222, 606]]);
  fan([219, 572], [[200, 608], [188, 612], [230, 605]]);
  fan([921, 405], [[941, 364], [934, 366], [927, 368], [941, 376], [941, 386], [941, 396]]);

  /* bottom edge and bottom bar */
  line([[180, 614], [196, 610], [220, 606], [235, 604], [260, 602], [640, 602]]);
  var bottom = [];
  for (x = 226; x < 625; x += 9.9) {
    bottom.push([x, 602], [x + 8 + (x - 226) * 0.012, 567 + jit(3)]);
  }
  line(bottom);
  fan([628, 606], [[633, 572], [647, 572]]);
  fan([636, 606], [[663, 570], [681, 572]]);
  fan([644, 606], [[699, 572], [712, 572]]);
  fan([640, 612], [[703, 588], [693, 601]]);
  fan([632, 622], [[685, 614], [679, 625], [668, 635]]);

  /* arms: a solid edge with teeth from each edge point */
  function sample(poly, step) {
    var out = [];
    var carry = 0;
    for (var i = 0; i < poly.length - 1; i++) {
      var a = poly[i], b = poly[i + 1];
      var dx = b[0] - a[0], dy = b[1] - a[1], len = Math.hypot(dx, dy);
      var t = carry;
      for (; t < len; t += step) {
        out.push([a[0] + dx * t / len, a[1] + dy * t / len]);
      }
      carry = t - len;
    }
    return out;
  }
  function arm(edge, vx, vy) {
    line(edge);
    var pts = [];
    sample(edge, 10.5).forEach(function (s) {
      pts.push([s[0], s[1]]);
      pts.push([s[0] + vx + jit(1.5), s[1] + vy + jit(1)]);
    });
    line(pts);
  }
  function shift(a, dx) { return a.map(function (p) { return [p[0] + dx, p[1]]; }); }
  var leftEdge = [[628, 628], [617, 646], [567, 725], [518, 813], [477, 900], [440, 985], [430, 1010]];
  var rightEdge = [[958, 578], [905, 640], [868, 688], [800, 810], [729, 965], [715, 1000]];
  arm(leftEdge, 38, 14);
  arm(rightEdge, -38, -14);
  fan([958, 560], [[921, 546], [921, 556]]);
  fan([952, 570], [[921, 566]]);

  document.getElementById("stitches").setAttribute("d", d.join(""));

  function poly(a) { return "M" + a.map(function (p) { return p.join(" "); }).join("L"); }
  document.getElementById("pink").setAttribute("d", [
    poly([[190.5, 369.5], [255.5, 372.5], [370.5, 376.5], [951.5, 376.5], [951.5, 575], [925, 610]]),
    poly([[190.5, 369.5], [190.5, 603.5], [210, 600.5], [230, 597.5], [370, 593.5], [640, 593.5], [664, 596.5], [630, 646]]),
    poly(shift(leftEdge, 13)), poly(shift(rightEdge, -10))
  ].join(""));

  /* nodes */
  var nodes = document.getElementById("nodes");
  function el(name, attrs, text) {
    var e = document.createElementNS(NS, name);
    for (var k in attrs) e.setAttribute(k, attrs[k]);
    if (text !== undefined) e.textContent = text;
    return e;
  }
  [[260, 363], [428, 368], [689, 367], [871, 368], [235, 604], [518, 813], [868, 688], [729, 965]].forEach(function (p) {
    nodes.appendChild(el("circle", { cx: p[0], cy: p[1], r: 3, fill: "#20a040", stroke: "#3a3" }));
  });
  [[300, 602], [650, 603]].forEach(function (p) {
    nodes.appendChild(el("rect", { x: p[0] - 3.5, y: p[1] - 3.5, width: 6, height: 6, fill: "#a01818", stroke: "#e8c0c0" }));
  });
  [[180, 615], [961, 575]].forEach(function (p) {
    nodes.appendChild(el("rect", { x: p[0] - 3.5, y: p[1] - 3.5, width: 6, height: 6, fill: "#000", stroke: "#f0c8c8" }));
  });

  /* rulers */
  var rh = document.getElementById("rulerH");
  rh.appendChild(el("rect", { x: 20, y: 115, width: 1260, height: 16, fill: "#fff" }));
  [-1, 0, 1, 2, 3, 4, 5, 6, 7, 8, 9, 10, 11].forEach(function (k) {
    var X = 180 + 99 * k;
    if (k < 8 || k === 11) {
      rh.appendChild(el("text", { x: X, y: 127, "class": "rnum" }, String(k)));
    }
    for (var j = 1; j < 10; j++) {
      var xx = Math.round(X + 9.9 * j);
      var mid = j === 5;
      rh.appendChild(el("rect", { x: xx, y: mid ? 119 : 123, width: 1, height: mid ? 7 : 1, fill: mid ? "#601010" : "#401818" }));
    }
  });
  rh.appendChild(el("rect", { x: 785, y: 115, width: 1, height: 16, fill: "#000" }));

  var rv = document.getElementById("rulerV");
  rv.appendChild(el("rect", { x: 4, y: 132, width: 16, height: 873, fill: "#fff" }));
  for (var k = -3; k <= 7; k++) {
    var Y = 357 + 99 * k;
    if (Y > 140 && Y < 1000) {
      rv.appendChild(el("text", { x: 0, y: 0, "class": "rnum", transform: "translate(17 " + Y + ") rotate(-90)" }, String(Math.abs(k))));
    }
    for (var j = 1; j < 10; j++) {
      var yy = Math.round(Y + 9.9 * j);
      var mid = j === 5;
      rv.appendChild(el("rect", { x: mid ? 7 : 11, y: yy, width: mid ? 8 : 2, height: 1, fill: mid ? "#601010" : "#401818" }));
    }
  }
  rv.appendChild(el("rect", { x: 4, y: 490, width: 16, height: 1, fill: "#000" }));
})();
```
